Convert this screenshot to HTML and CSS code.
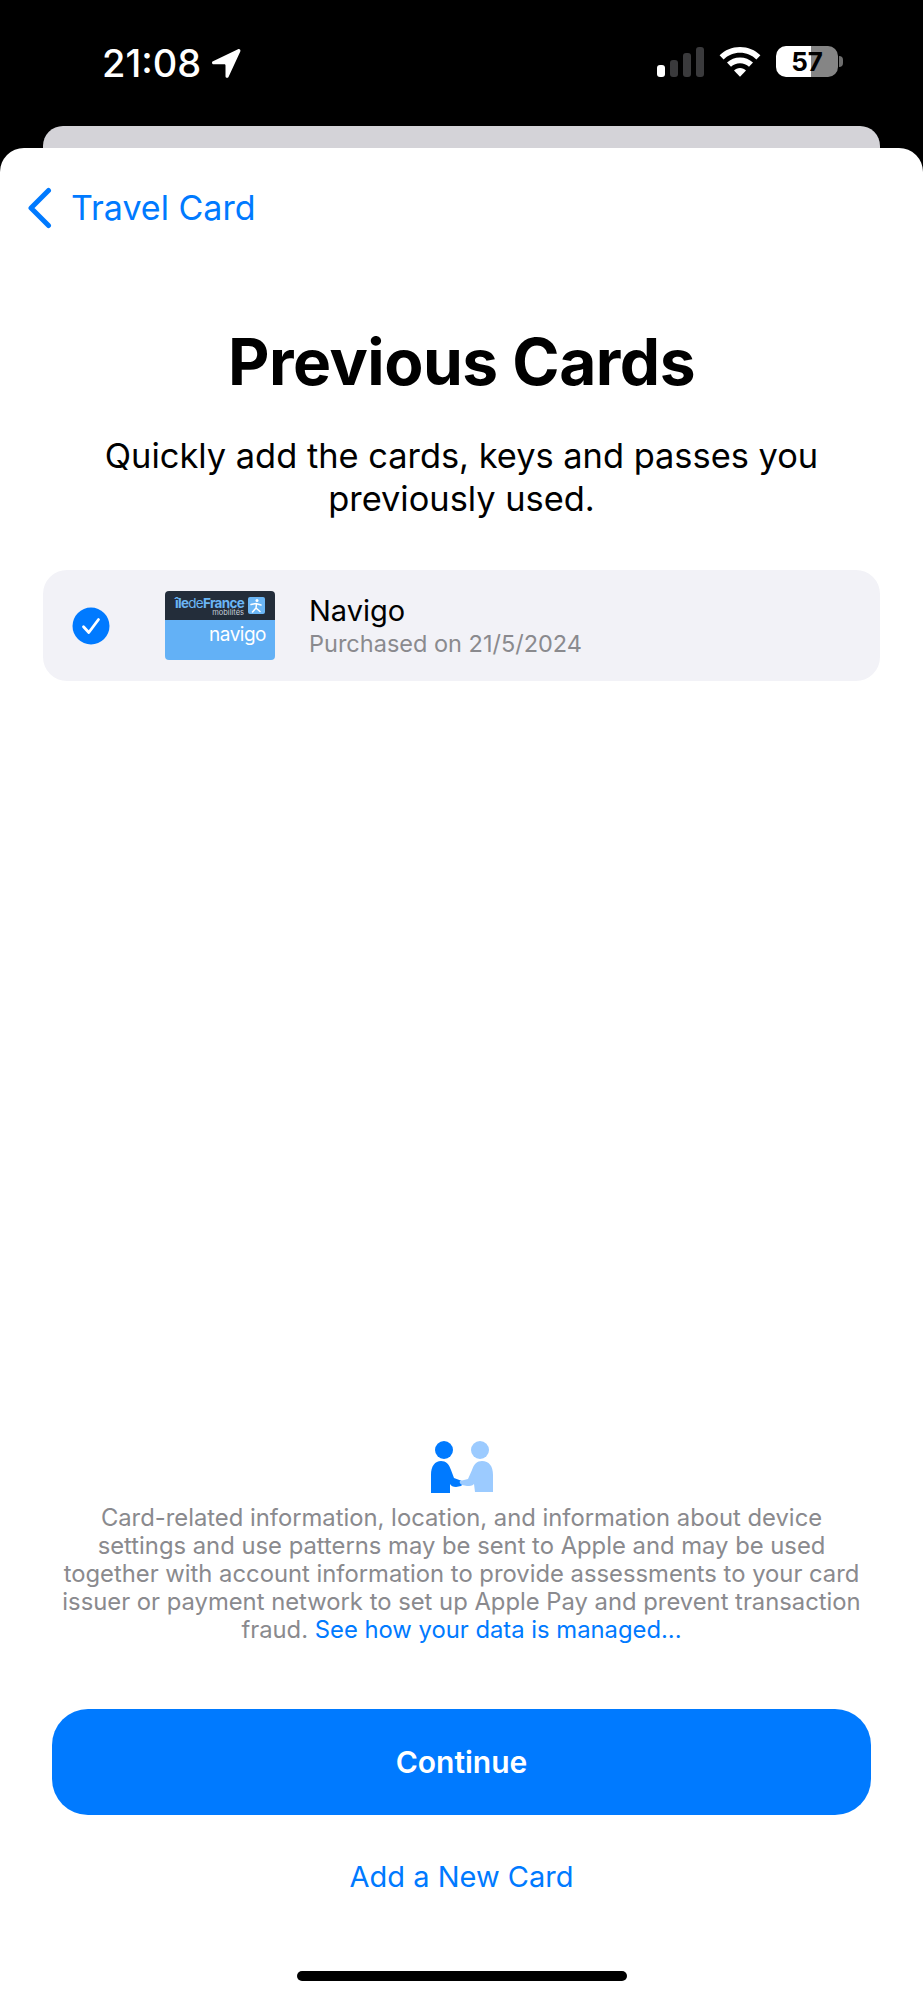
FILE: index.html
```html
<!DOCTYPE html>
<html lang="en">
<head>
  <meta charset="UTF-8" />
  <meta name="viewport" content="width=device-width, initial-scale=1.0"/>
  <title>Previous Cards</title>
  <link rel="stylesheet" href="styles.css">
</head>
<body>
  <div class="status-bar">
    <div class="status-left">
      <span class="time">21:08</span>
      <svg class="location" width="30" height="31" viewBox="0 0 30 31"><path d="M27 1.2 2 13.2c-1.6.8-1.1 3 .7 3h10.6c.7 0 1.2.5 1.2 1.2v10.8c0 1.8 2.3 2.3 3 .7L29.3 3.5c.7-1.5-.8-3-2.3-2.3z" fill="#fff"/></svg>
    </div>
    <div class="status-right">
      <div class="signal">
        <span class="bar bar1"></span>
        <span class="bar bar2"></span>
        <span class="bar bar3"></span>
        <span class="bar bar4"></span>
      </div>
      <svg class="wifi" width="42" height="30" viewBox="0 0 42 30"><path d="M21 0C13 0 6 3 .6 8.300l4 4.200C9 8.200 14.700 5.800 21 5.800s12 2.400 16.400 6.700l4-4.200C36 3 29 0 21 0z" fill="#fff"/><path d="M21 10.400c-5 0-9.500 1.900-13 5.200l4 4.200c2.400-2.200 5.500-3.600 9-3.600s6.600 1.400 9 3.600l4-4.200c-3.500-3.300-8-5.200-13-5.200z" fill="#fff"/><path d="M21 21c-2.400 0-4.500.9-6 2.400l6 6.400 6-6.400c-1.500-1.500-3.600-2.400-6-2.400z" fill="#fff"/></svg>
      <div class="battery">
        <div class="battery-body">57</div>
        <span class="battery-nub"></span>
      </div>
    </div>
  </div>

  <div class="sheet-behind"></div>

  <div class="sheet">
    <a class="back">
      <svg width="26" height="42" viewBox="0 0 26 42"><path d="M22.500 3.500 5 21l17.500 17.500" fill="none" stroke="#007aff" stroke-width="5" stroke-linecap="round" stroke-linejoin="round"/></svg>
      <span>Travel Card</span>
    </a>

    <h1 class="title">Previous Cards</h1>
    <p class="subtitle">Quickly add the cards, keys and passes you previously used.</p>

    <div class="card-row">
      <svg class="check" width="38" height="38" viewBox="0 0 38 38"><circle cx="19" cy="19" r="18.500" fill="#007aff"/><path d="M11.500 19.800 16.800 25.500 26.500 12.500" fill="none" stroke="#fff" stroke-width="2.800" stroke-linecap="round" stroke-linejoin="round"/></svg>
      <div class="card-art">
        <div class="card-art-top">
          <div class="idf">
            <div class="idf-name">île<i>de</i>France</div>
            <div class="idf-sub">mobilités</div>
          </div>
          <svg class="idf-icon" width="17" height="17" viewBox="0 0 17 17"><rect width="17" height="17" rx="2" fill="#6bb6f5"/><circle cx="9" cy="3.500" r="1.500" fill="#fff"/><path d="M3 7.500 8 6.500l5 1.500M8.500 7l-.5 4-3.500 4M8 11l4 3.500" fill="none" stroke="#fff" stroke-width="1.500" stroke-linecap="round"/></svg>
        </div>
        <div class="card-art-bottom">navigo</div>
      </div>
      <div class="card-info">
        <div class="card-name">Navigo</div>
        <div class="card-date">Purchased on 21/5/2024</div>
      </div>
    </div>

    <div class="spacer"></div>

    <svg class="people" width="64" height="52" viewBox="0 0 64 52">
      <circle cx="14" cy="9" r="9" fill="#007aff"/>
      <path d="M1 51V34c0-9 4-14 10-14 5 0 8 3 10 9l3 8 8 3c2 1 1 4-1 5l-5 1c-3 0-5-1-6-3v12H1z" fill="#007aff"/>
      <circle cx="50" cy="9" r="9" fill="#9ccbff"/>
      <path d="M63 51V34c0-9-4-14-11-14-5 0-8 3-10 9l-4 9-8 2c-1 1 0 3 2 4l5 1c3 0 5 0 7-2l1 8h18z" fill="#9ccbff"/>
    </svg>

    <p class="legal">Card-related information, location, and information about device settings and use patterns may be sent to Apple and may be used together with account information to provide assessments to your card issuer or payment network to set up Apple Pay and prevent transaction fraud. <a>See how your data is managed...</a></p>

    <button class="continue">Continue</button>
    <a class="add-new">Add a New Card</a>
    <div class="home-bar"></div>
  </div>
</body>
</html>
```

FILE: styles.css
```css
* {
  box-sizing: border-box;
}

html, body {
  margin: 0;
  height: 2000px;
  background-color: black;
  font-family: Inter, "Noto Sans", sans-serif;
  overflow: hidden;
}

body {
  display: flex;
  flex-direction: column;
}

.status-bar {
  height: 126px;
  padding: 47px 80px 0 102px;
  display: flex;
  justify-content: space-between;
  align-items: flex-start;
  color: white;
}

.status-left {
  display: flex;
  align-items: center;
  gap: 10px;
}

.time {
  font-size: 38px;
  line-height: 32px;
  font-weight: 500;
}

.status-right {
  display: flex;
  align-items: flex-start;
  gap: 15px;
}

.signal {
  display: flex;
  align-items: flex-end;
  gap: 5px;
  height: 30px;
}

.bar {
  width: 8px;
  border-radius: 3px;
  background-color: #3a3a3c;
}

.bar1 { height: 12px; background-color: white; }
.bar2 { height: 17px; }
.bar3 { height: 24px; }
.bar4 { height: 30px; }

.battery {
  display: flex;
  align-items: center;
  gap: 1px;
  margin-top: -1px;
}

.battery-body {
  width: 62px;
  height: 31px;
  border-radius: 10px;
  background: linear-gradient(90deg, white 0 35px, #858585 35px);
  color: black;
  font-size: 26px;
  font-weight: 700;
  line-height: 31px;
  text-align: center;
}

.battery-nub {
  width: 4px;
  height: 11px;
  border-radius: 0 4px 4px 0;
  background-color: #6e6e6e;
}

.sheet-behind {
  height: 22px;
  margin: 0 43px;
  border-radius: 20px 20px 0 0;
  background-color: #d4d3d8;
}

.sheet {
  flex: 1;
  display: flex;
  flex-direction: column;
  align-items: center;
  background-color: white;
  border-radius: 24px 24px 0 0;
}

.back {
  align-self: flex-start;
  display: flex;
  align-items: center;
  gap: 19px;
  margin: 39px 0 0 26px;
  color: #007aff;
  font-size: 34px;
  line-height: 42px;
}

.title {
  margin: 94px 0 0;
  font-size: 64px;
  line-height: 78px;
  font-weight: 700;
  color: black;
  letter-spacing: -0.5px;
}

.subtitle {
  width: 780px;
  margin: 33px 0 0;
  font-size: 34.400px;
  line-height: 43px;
  text-align: center;
  color: black;
}

.card-row {
  width: 837px;
  height: 111px;
  margin-top: 50px;
  padding-left: 29px;
  display: flex;
  align-items: center;
  border-radius: 24px;
  background-color: #f2f2f7;
}

.check {
  flex-shrink: 0;
}

.card-art {
  width: 110px;
  height: 69px;
  margin-left: 55px;
  border-radius: 4px;
  overflow: hidden;
  display: flex;
  flex-direction: column;
}

.card-art-top {
  height: 29px;
  padding: 6px 10px 0 10px;
  background-color: #232d3a;
  display: flex;
  justify-content: space-between;
  gap: 3px;
}

.idf {
  color: #6bb6f5;
  text-align: right;
}

.idf-name {
  font-size: 13.500px;
  line-height: 12px;
  font-weight: 700;
  letter-spacing: -0.7px;
}

.idf-name i {
  font-style: normal;
  font-weight: 400;
}

.idf-sub {
  font-size: 7.500px;
  line-height: 8px;
  color: #c6d0da;
}

.card-art-bottom {
  flex: 1;
  padding: 1px 9px 0 0;
  background-color: #63b1f6;
  color: white;
  text-align: right;
  font-size: 19px;
  line-height: 27px;
  font-weight: 400;
  letter-spacing: -0.5px;
}

.card-info {
  margin-left: 34px;
}

.card-name {
  font-size: 29px;
  line-height: 36px;
  color: black;
}

.card-date {
  font-size: 23.500px;
  line-height: 30px;
  color: #8a8a8e;
}

.spacer {
  flex: 1;
}

.people {
  flex-shrink: 0;
}

.legal {
  width: 810px;
  margin: 11px 0 0;
  font-size: 23.800px;
  line-height: 28px;
  text-align: center;
  color: #8a8a8e;
}

.legal a {
  color: #007aff;
}

.continue {
  width: 819px;
  height: 106px;
  margin-top: 65px;
  border: none;
  border-radius: 36px;
  background-color: #007aff;
  color: white;
  font-family: inherit;
  font-size: 30px;
  font-weight: 600;
}

.add-new {
  margin-top: 44px;
  color: #007aff;
  font-size: 29px;
  line-height: 36px;
}

.home-bar {
  width: 330px;
  height: 10px;
  margin: 76px 0 19px;
  border-radius: 5px;
  background-color: black;
}
```
